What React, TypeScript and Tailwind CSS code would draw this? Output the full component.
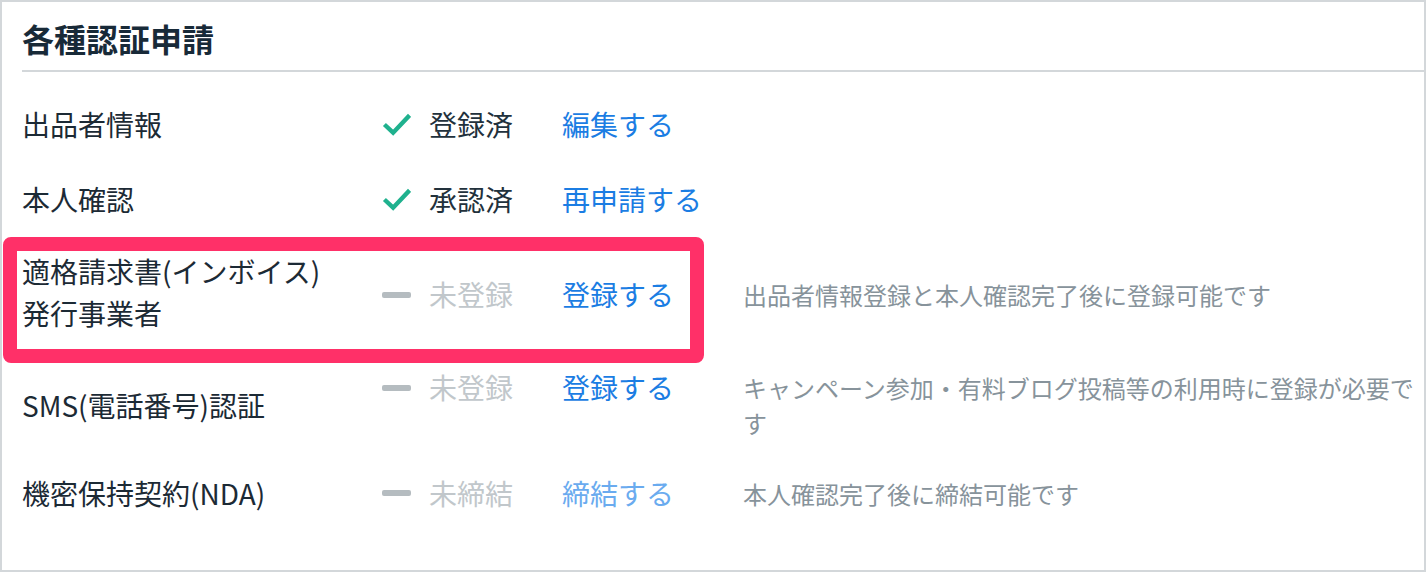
import React from 'react';

type Status = 'done' | 'none';

interface Row {
  label: string[];
  status: Status;
  statusText: string;
  action: string;
  actionDisabled?: boolean;
  note?: string;
  height: string;
  highlight?: boolean;
}

const rows: Row[] = [
  { label: ['出品者情報'], status: 'done', statusText: '登録済', action: '編集する', height: 'h-[72px]' },
  { label: ['本人確認'], status: 'done', statusText: '承認済', action: '再申請する', height: 'h-[78px]' },
  {
    label: ['適格請求書(インボイス)', '発行事業者'],
    status: 'none',
    statusText: '未登録',
    action: '登録する',
    note: '出品者情報登録と本人確認完了後に登録可能です',
    height: 'h-[108px]',
    highlight: true,
  },
  {
    label: ['SMS(電話番号)認証'],
    status: 'none',
    statusText: '未登録',
    action: '登録する',
    note: 'キャンペーン参加・有料ブログ投稿等の利用時に登録が必要です',
    height: 'h-[118px]',
  },
  {
    label: ['機密保持契約(NDA)'],
    status: 'none',
    statusText: '未締結',
    action: '締結する',
    actionDisabled: true,
    note: '本人確認完了後に締結可能です',
    height: 'h-[58px]',
  },
];

const CheckIcon: React.FC = () => (
  <svg width="30" height="24" viewBox="0 0 30 24" fill="none">
    <path d="M2.5 12.5 L11.5 21 L28.5 3" stroke="#1fb18e" strokeWidth="4.5" />
  </svg>
);

const StatusCell: React.FC<{ row: Row }> = ({ row }) => (
  <div className="w-[180px] shrink-0 flex items-center h-[35px]">
    <div className="w-[29px] flex items-center justify-center">
      {row.status === 'done' ? (
        <CheckIcon />
      ) : (
        <span className="block w-[29px] h-[6px] rounded-[2px] bg-[#b5bcc0]" />
      )}
    </div>
    <span
      className={`ml-[18px] text-[28px] leading-[35px] ${
        row.status === 'done' ? 'text-[#22313c]' : 'text-[#c1c7cb]'
      }`}
    >
      {row.statusText}
    </span>
  </div>
);

const App: React.FC = () => {
  return (
    <div className="w-[1426px] h-[572px] border-2 border-[#d3d7da] bg-white font-['Noto_Sans_CJK_JP',sans-serif] overflow-hidden">
      {/* Header */}
      <div className="pl-5">
        <div className="h-[70px] flex items-center pt-1 border-b-2 border-[#d3d7da]">
          <h1 className="text-[32px] font-bold text-[#182a38] leading-none">各種認証申請</h1>
        </div>
      </div>

      {/* Rows */}
      <div className="pt-4">
        {rows.map((row) => (
          <div key={row.label.join('')} className={`relative flex items-center pl-5 ${row.height}`}>
            {row.highlight && (
              <div className="absolute left-px -top-px w-[701px] h-[126px] border-[14px] border-[#ff3068] rounded-[8px] pointer-events-none" />
            )}
            <div className="w-[360px] shrink-0 text-[28px] leading-[42px] text-[#1c2a35]">
              {row.label.map((l) => (
                <div key={l}>{l}</div>
              ))}
            </div>
            <div className={`flex-1 flex items-start ${row.highlight ? 'pt-[5px]' : ''}`}>
              <StatusCell row={row} />
              <div className="w-[181px] shrink-0">
                <a
                  href="#"
                  className={`text-[28px] leading-[35px] ${
                    row.actionDisabled ? 'text-[#6aabef]' : 'text-[#1b7de3]'
                  }`}
                >
                  {row.action}
                </a>
              </div>
              {row.note && (
                <p className="flex-1 text-[24px] leading-[35px] text-[#87939b]">{row.note}</p>
              )}
            </div>
          </div>
        ))}
      </div>
    </div>
  );
};

export default App;
